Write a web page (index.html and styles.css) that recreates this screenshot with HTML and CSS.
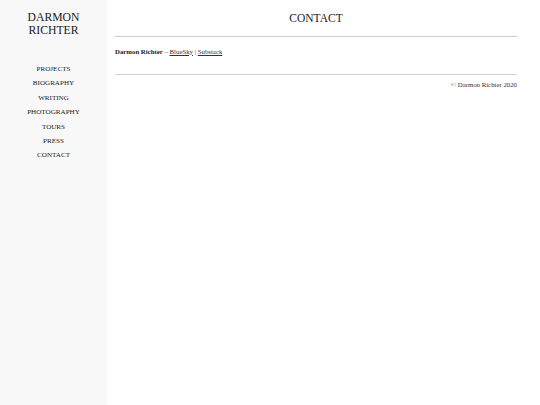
FILE: index.html
```html
<!DOCTYPE html>
<html>
<head>
<meta charset="utf-8">
<title>Contact – Darmon Richter</title>
<link rel="stylesheet" href="styles.css">
</head>
<body>
<div class="page">
  <aside class="sidebar">
    <div class="site-title">DARMON<br>RICHTER</div>
    <nav class="nav">
      <a href="#">PROJECTS</a>
      <a href="#">BIOGRAPHY</a>
      <a href="#">WRITING</a>
      <a href="#">PHOTOGRAPHY</a>
      <a href="#">TOURS</a>
      <a href="#">PRESS</a>
      <a href="#">CONTACT</a>
    </nav>
  </aside>
  <main class="main">
    <h1 class="heading">CONTACT</h1>
    <hr class="rule">
    <p class="contact"><strong>Darmon Richter</strong> – <a href="#">BlueSky</a> | <a href="#">Substack</a></p>
    <hr class="rule">
    <p class="footer">© Darmon Richter 2020</p>
  </main>
</div>
</body>
</html>
```
FILE: styles.css
```css
html, body {
  margin: 0;
  padding: 0;
  background: #ffffff;
}
body {
  font-family: "Liberation Serif", "Times New Roman", serif;
  color: #222;
}
.page {
  display: flex;
  min-height: 100vh;
}
.sidebar {
  width: 107px;
  flex: none;
  background: #f8f8f8;
  text-align: center;
  padding-top: 11px;
}
.site-title {
  font-size: 11.7px;
  line-height: 13px;
  color: #222;
}
.nav {
  display: flex;
  flex-direction: column;
  margin-top: 25px;
}
.nav a {
  font-size: 7.1px;
  line-height: 14.4px;
  color: #222;
  text-decoration: none;
}
.main {
  flex: 1;
  padding: 0 23px 0 8px;
}
.heading {
  margin: 0 0 11.5px;
  padding-top: 11.5px;
  font-size: 11.5px;
  line-height: 13px;
  font-weight: normal;
  text-align: center;
  color: #222;
}
.rule {
  margin: 0;
  border: 0;
  border-top: 1px solid #cfcfcf;
  height: 0;
}
.contact {
  margin: 9.7px 0 18.3px;
  font-size: 6.8px;
  line-height: 9px;
  color: #333;
}
.contact strong {
  color: #222;
}
.contact a {
  color: #333;
  text-decoration: underline;
}
.footer {
  margin: 5.5px 0 0;
  font-size: 6.8px;
  line-height: 9px;
  text-align: right;
  color: #333;
}
```
